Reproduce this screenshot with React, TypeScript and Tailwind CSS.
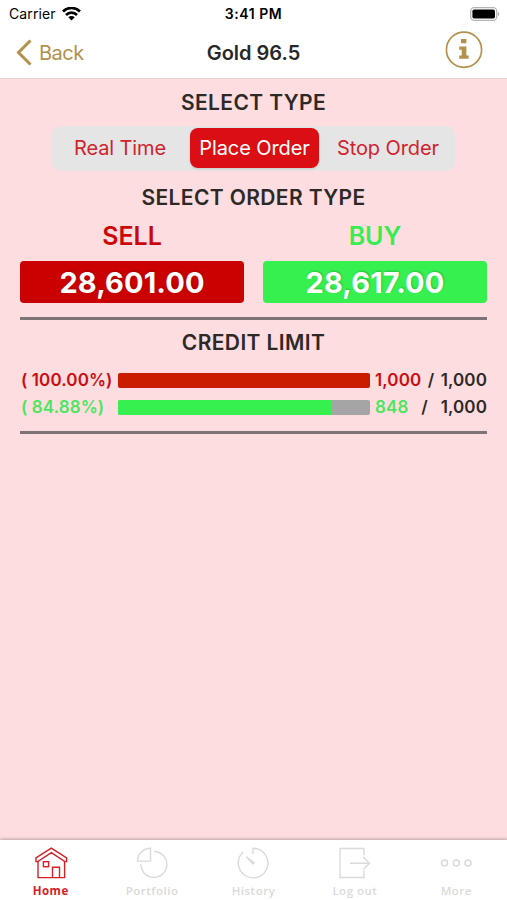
import React from 'react';

const tabs = [
  { name: 'Home', icon: HomeIcon },
  { name: 'Portfolio', icon: PortfolioIcon },
  { name: 'History', icon: HistoryIcon },
  { name: 'Log out', icon: LogoutIcon },
  { name: 'More', icon: MoreIcon },
];

const orderModes = ['Real Time', 'Place Order', 'Stop Order'];

function HomeIcon() {
  return (
    <svg width="34" height="34" viewBox="0 0 34 34" fill="none" stroke="currentColor" strokeWidth="1.4">
      <path d="M2 11.800 17.300 2.200 32.600 11.800v3.800H30.800L17.300 6.700 3.800 15.600H2z" />
      <path d="M4 15.400v16.200h26.600V15.400M18.500 31.600V21.200h7v10.400" />
      <rect x="9.400" y="15.700" width="5.200" height="5" />
    </svg>
  );
}

function PortfolioIcon() {
  return (
    <svg width="34" height="34" viewBox="0 0 34 34" fill="none" stroke="currentColor" strokeWidth="1.400">
      <path d="M15.500 2.200v12.900H2.500C2.700 7.600 8.200 2.500 15.500 2.200z" />
      <path d="M19.200 5.500a13 13 0 1 1-13.300 12.800" />
    </svg>
  );
}

function HistoryIcon() {
  return (
    <svg width="34" height="34" viewBox="0 0 34 34" fill="none" stroke="currentColor" strokeWidth="1.400">
      <path d="M17 8V2.200a14.800 14.800 0 1 1-9.700 3.700" />
      <path d="M10.300 10.700 18 16.900 17 18z" fill="currentColor" />
    </svg>
  );
}

function LogoutIcon() {
  return (
    <svg width="34" height="34" viewBox="0 0 34 34" fill="none" stroke="currentColor" strokeWidth="1.400">
      <path d="M26 9.300V2.500H2v29h24V24.500" />
      <path d="M12 17.200h19.500M25.200 10.900l6.300 6.300-6.300 6.300" />
    </svg>
  );
}

function MoreIcon() {
  return (
    <svg width="34" height="34" viewBox="0 0 34 34" fill="none" stroke="currentColor" strokeWidth="1.500">
      <circle cx="5.500" cy="17" r="3" />
      <circle cx="17.300" cy="17" r="3" />
      <circle cx="29" cy="17" r="3" />
    </svg>
  );
}

const StatusBar = () => (
  <div className="grid h-[27px] grid-cols-3 items-center px-[7px] text-black">
    <div className="flex items-center gap-[6px] pl-[2px]">
      <span className="text-[14px] tracking-[0.1px]">Carrier</span>
      <svg width="19" height="14" viewBox="0 0 19 14" fill="none" stroke="#000" strokeWidth="2.700">
        <path d="M1 4.400a12.300 12.300 0 0 1 17 0" />
        <path d="M4 7.900a8 8 0 0 1 11 0" />
        <path d="M9.500 13.400 6.300 10.200a4.600 4.600 0 0 1 6.400 0z" fill="#000" stroke="none" />
      </svg>
    </div>
    <span className="text-center text-[14px] font-semibold tracking-[0.55px]">3:41 PM</span>
    <svg className="justify-self-end" width="30" height="14" viewBox="0 0 30 14">
      <rect x="0.700" y="0.700" width="26" height="12.600" rx="3.500" fill="#fff" stroke="#b5b5b5" strokeWidth="1.300" />
      <rect x="2.400" y="2.400" width="22.600" height="9.200" rx="1.800" fill="#000" />
      <path d="M28 5v4c1.500-.3 1.500-3.700 0-4z" fill="#a5a5a5" />
    </svg>
  </div>
);

const NavBar = () => (
  <div className="grid h-[52px] grid-cols-3 border-b border-[#e9cfd0] px-4">
    <button className="flex items-center gap-[7px] text-[#b3914d]">
      <svg width="16" height="27" viewBox="0 0 16 27" fill="none" stroke="currentColor" strokeWidth="3">
        <path d="M14.500 1.500 2.500 13.500l12 12" />
      </svg>
      <span className="text-[20px] tracking-[-0.5px]">Back</span>
    </button>
    <h1 className="self-center text-center text-[20px] font-semibold text-[#282828]">Gold 96.5</h1>
    <svg className="mr-2 mt-[4px] justify-self-end" width="38" height="38" viewBox="0 0 38 38" fill="none">
      <circle cx="19" cy="18.700" r="17.600" stroke="#b3914d" strokeWidth="1.700" />
      <path d="M16 8h5.400v4.200H16zM14.200 15.600h7.200v9h2.200v3.100h-9.400v-3.100h2.500v-5.800h-2.500z" fill="#b3914d" />
    </svg>
  </div>
);

const SectionTitle = ({ children }: { children: React.ReactNode }) => (
  <h2 className="text-center text-[21px] font-semibold leading-[26px] tracking-[0.38px] text-[#2d2927]">
    {children}
  </h2>
);

const TypeSelector = () => (
  <div className="mx-auto mt-[10px] grid h-[45px] w-[403px] grid-cols-[136px_133px_134px] rounded-[9px] bg-[#e5e5e5] text-[20px] tracking-[-0.1px]">
    {orderModes.map((mode) => (
      <button
        key={mode}
        className={
          mode === 'Place Order'
            ? 'mx-[2px] mb-[3px] mt-[2px] rounded-[8px] bg-[#db0f13] text-white shadow'
            : 'pb-px text-[#d0232b]'
        }
      >
        {mode}
      </button>
    ))}
  </div>
);

const Prices = () => (
  <div className="mx-5 mt-[10px] grid grid-cols-2 gap-[19px] border-b-[3px] border-[#7e7376] pb-[14px] text-center">
    <div>
      <div className="text-[25px] font-semibold leading-[30px] text-[#cb0808]">SELL</div>
      <button className="mt-[10px] block h-[42px] w-full rounded bg-[#cb0000] text-[29px] font-bold tracking-[0.1px] text-white [text-shadow:1px_-1px_2px_#0003]">
        28,601.00
      </button>
    </div>
    <div>
      <div className="text-[25px] font-semibold leading-[30px] text-[#38ed51]">BUY</div>
      <button className="mt-[10px] block h-[42px] w-full rounded bg-[#36f050] text-[29px] font-bold tracking-[0.1px] text-white [text-shadow:1px_-1px_2px_#0003]">
        28,617.00
      </button>
    </div>
  </div>
);

const CreditLimit = () => (
  <div className="mx-5 border-b-[3px] border-[#7e7376] pb-[10px] text-[17px] font-semibold leading-[27px] tracking-[0.1px]">
    <div className="flex items-center">
      <span className="w-[98px] whitespace-nowrap pl-[1px] text-[#c90d12]">( 100.00%)</span>
      <div className="h-[15px] w-[252px] rounded-[2px] bg-[#ca1d00]" />
      <div className="flex flex-1 justify-between pl-[5px] text-[#2d2927]">
        <span className="text-[#c90d12]">1,000</span>
        <span>/</span>
        <span>1,000</span>
      </div>
    </div>
    <div className="flex items-center">
      <span className="w-[98px] whitespace-nowrap pl-[1px] text-[#4be65f]">( 84.88%)</span>
      <div className="h-[15px] w-[252px] overflow-hidden rounded-[2px] bg-[#a5a5a5]">
        <div className="h-full w-[85%] bg-[#36f050]" />
      </div>
      <div className="flex flex-1 justify-between pl-[5px] text-[#2d2927]">
        <span className="text-[#4be65f]">848</span>
        <span>/</span>
        <span>1,000</span>
      </div>
    </div>
  </div>
);

const TabBar = () => (
  <nav className="grid h-[60px] shrink-0 grid-cols-5 bg-white shadow-[0_-1px_3px_#0004]">
    {tabs.map(({ name, icon: Icon }) => (
      <button
        key={name}
        className={`flex flex-col items-center pt-[6px] font-['Open_Sans',sans-serif] text-[11.5px] leading-[15px] tracking-[0.5px] ${
          name === 'Home' ? 'font-bold text-[#d52027]' : 'font-semibold text-[#dadada]'
        }`}
      >
        <Icon />
        <span className="mt-[3px]">{name}</span>
      </button>
    ))}
  </nav>
);

export default function App() {
  return (
    <div className="flex h-[900px] w-[507px] flex-col bg-white font-['Inter',sans-serif]">
      <StatusBar />
      <NavBar />
      <main className="flex-1 bg-[#fddddf] pt-[11px]">
        <SectionTitle>SELECT TYPE</SectionTitle>
        <TypeSelector />
        <div className="mt-[14px]">
          <SectionTitle>SELECT ORDER TYPE</SectionTitle>
        </div>
        <Prices />
        <div className="mb-[11px] mt-[10px]">
          <SectionTitle>CREDIT LIMIT</SectionTitle>
        </div>
        <CreditLimit />
      </main>
      <TabBar />
    </div>
  );
}
